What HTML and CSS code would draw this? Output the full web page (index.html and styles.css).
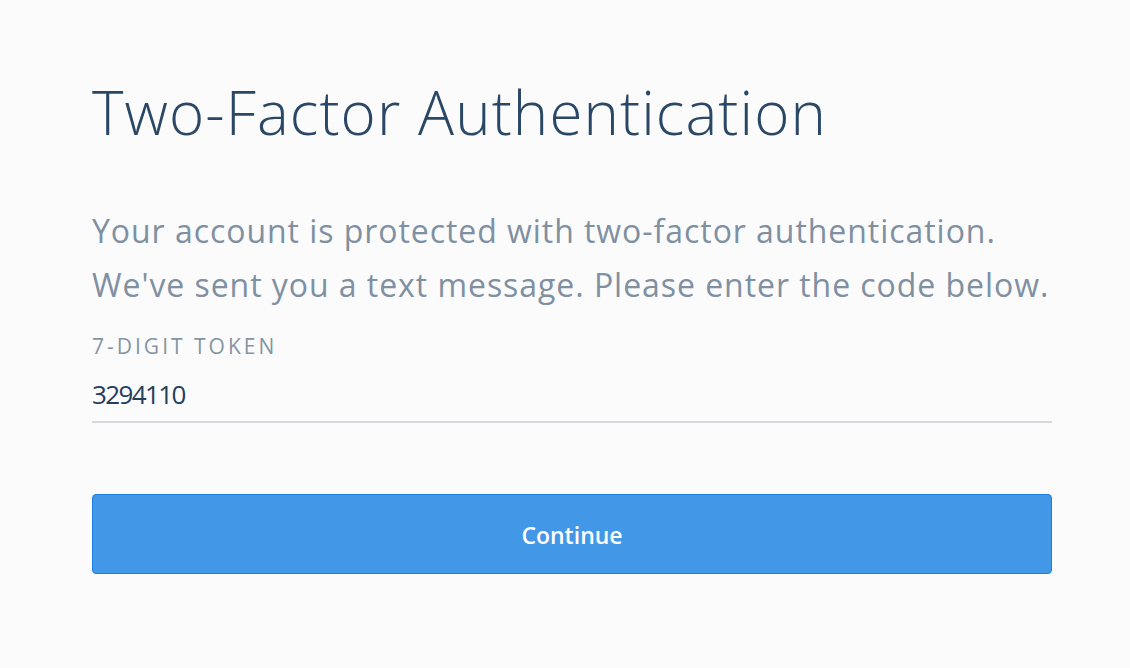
FILE: index.html
```html
<!DOCTYPE html>
<html>
<head>
<meta charset="utf-8">
<link rel="stylesheet" href="styles.css">
</head>
<body>
<main class="page">
  <h1 class="title">Two-Factor Authentication</h1>
  <p class="intro">Your account is protected with two-factor authentication.<br>We've sent you a text message. Please enter the code below.</p>
  <label class="field">
    <span class="label">7-DIGIT TOKEN</span>
    <span class="value">3294110</span>
  </label>
  <button class="btn">Continue</button>
</main>
</body>
</html>
```
FILE: styles.css
```css
html, body {
  margin: 0;
  padding: 0;
  background: #fbfbfc;
}
.page {
  width: 960px;
  padding: 0 0 0 92px;
  display: flex;
  flex-direction: column;
  font-family: "Open Sans", sans-serif;
}
.title {
  margin: 76px 0 0 0;
  font-size: 60px;
  font-weight: 300;
  line-height: 72px;
  letter-spacing: 1.1px;
  color: #2a4866;
}
.intro {
  margin: 56px 0 0 0;
  font-size: 32px;
  line-height: 54px;
  font-weight: 400;
  letter-spacing: 0.95px;
  color: #7f90a2;
}
.field {
  display: flex;
  flex-direction: column;
  margin-top: 21px;
  border-bottom: 2px solid #d5d8dc;
}
.label {
  font-size: 21px;
  letter-spacing: 3px;
  color: #8494a5;
  line-height: 26px;
}
.value {
  margin-top: 20px;
  font-size: 26px;
  line-height: 30px;
  letter-spacing: -1.6px;
  color: #22405e;
  padding-bottom: 12px;
}
.btn {
  margin-top: 71px;
  height: 80px;
  width: 960px;
  background: #4297e6;
  border: 1px solid #1a7fe1;
  border-radius: 4px;
  color: #fff;
  font-family: "Open Sans", sans-serif;
  font-weight: 600;
  font-size: 23px;
  padding-top: 2px;
}
```
